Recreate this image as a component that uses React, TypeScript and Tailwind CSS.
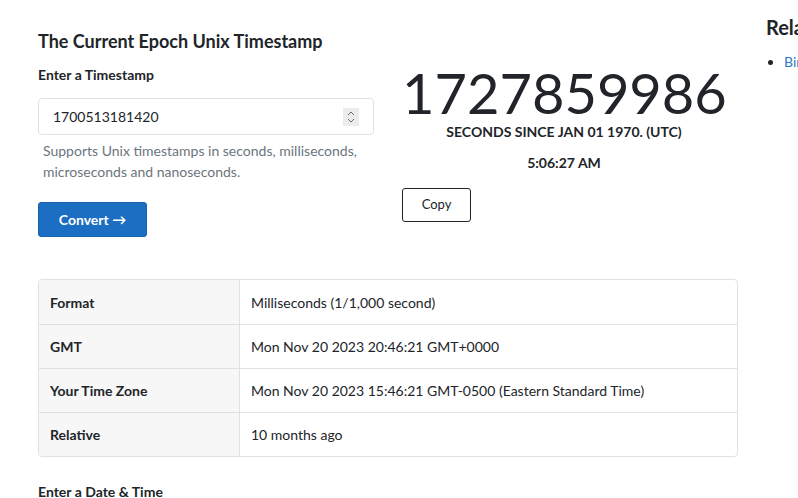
export default function App() {
  const rows = [
    { label: 'Format', value: 'Milliseconds (1/1,000 second)' },
    { label: 'GMT', value: 'Mon Nov 20 2023 20:46:21 GMT+0000' },
    { label: 'Your Time Zone', value: 'Mon Nov 20 2023 15:46:21 GMT-0500 (Eastern Standard Time)' },
    { label: 'Relative', value: '10 months ago' },
  ];

  return (
    <div
      className="w-[798px] h-[498px] overflow-hidden bg-white text-[#212529]"
      style={{ fontFamily: 'Lato, "Open Sans", sans-serif' }}
    >
      <div className="flex pl-[38px]">
        <div className="w-[700px] shrink-0 pt-[30px]">
          <div className="flex">
            <div className="w-[336px] shrink-0">
              <h1 className="text-[18px] font-bold leading-[22px]">The Current Epoch Unix Timestamp</h1>
              <label className="mt-[13px] block text-[14px] font-bold leading-[20px]">Enter a Timestamp</label>
              <div className="mt-[13px] flex h-[37px] items-center rounded-[4px] border border-[#dee2e6] pl-[14px] pr-[14px]">
                <span className="flex-1 text-[14px]">1700513181420</span>
                <div className="flex h-[18px] w-[16px] flex-col items-center justify-center bg-[#ececec]">
                  <svg width="8" height="14" viewBox="0 0 8 14" fill="none" stroke="#6b6b6b" strokeWidth="1">
                    <path d="M1 5 L4 2 L7 5" />
                    <path d="M1 9 L4 12 L7 9" />
                  </svg>
                </div>
              </div>
              <p className="mt-[5px] pl-[5px] text-[14px] leading-[21px] text-[#6c757d]">
                Supports Unix timestamps in seconds, milliseconds, microseconds and nanoseconds.
              </p>
              <button className="mt-[20px] flex h-[35px] w-[109px] items-center justify-center rounded-[3px] border border-[#1861ac] bg-[#1b6ec2] text-[14px] font-bold text-white">
                Convert →
              </button>
            </div>
            <div className="ml-[28px] w-[324px] shrink-0 pt-[34px]">
              <div className="text-center text-[56px] leading-[58px]">1727859986</div>
              <div className="text-center text-[14px] font-bold leading-[20px]">SECONDS SINCE JAN 01 1970. (UTC)</div>
              <div className="mt-[11px] text-center text-[14px] font-bold leading-[20px]">5:06:27 AM</div>
              <button className="mt-[15px] h-[34px] w-[69px] rounded-[3px] border border-[#212529] bg-white text-[13px]">
                Copy
              </button>
            </div>
          </div>

          <div className="mt-[42px] overflow-hidden rounded-[4px] border border-[#dee2e6]">
            {rows.map((r, i) => (
              <div key={r.label} className={`flex h-[44px] items-center ${i > 0 ? 'border-t border-[#dee2e6]' : ''}`}>
                <div className="flex h-full w-[201px] shrink-0 items-center border-r border-[#dee2e6] bg-[#f7f7f7] pl-[11px] text-[14px] font-bold">
                  {r.label}
                </div>
                <div className="pl-[11px] text-[14px]">{r.value}</div>
              </div>
            ))}
          </div>

          <div className="mt-[25px] text-[14px] font-bold leading-[20px]">Enter a Date &amp; Time</div>
        </div>

        <div className="ml-[28px] w-[220px] shrink-0 pt-[15px]">
          <h2 className="text-[20px] font-bold leading-[24px]">Related Tools</h2>
          <ul className="mt-[13px] list-disc pl-[18px] text-[14px] leading-[20px]">
            <li className="text-[#212529]">
              <span className="text-[#2a7ac4]">Binary Converter</span>
            </li>
          </ul>
        </div>
      </div>
    </div>
  );
}
